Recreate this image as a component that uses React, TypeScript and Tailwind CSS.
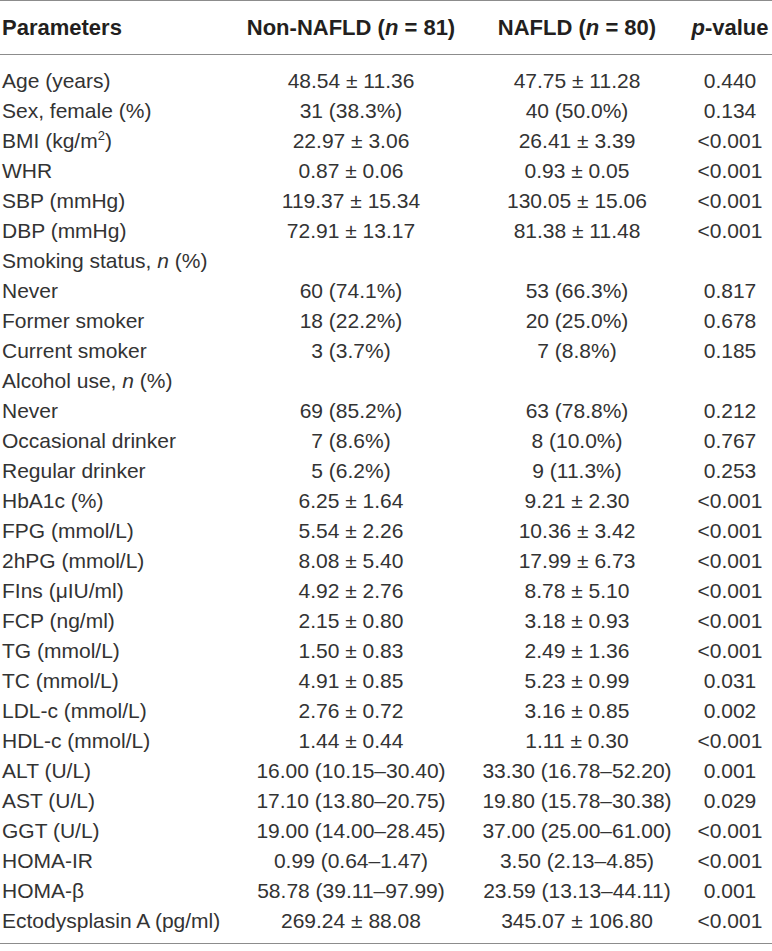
import React from 'react';

type Row = {
  label: React.ReactNode;
  a?: string;
  b?: string;
  p?: string;
};

const rows: Row[] = [
  { label: 'Age (years)', a: '48.54 ± 11.36', b: '47.75 ± 11.28', p: '0.440' },
  { label: 'Sex, female (%)', a: '31 (38.3%)', b: '40 (50.0%)', p: '0.134' },
  {
    label: (
      <>
        BMI (kg/m<sup className="text-[13px] -top-[8px]">2</sup>)
      </>
    ),
    a: '22.97 ± 3.06',
    b: '26.41 ± 3.39',
    p: '<0.001'
  },
  { label: 'WHR', a: '0.87 ± 0.06', b: '0.93 ± 0.05', p: '<0.001' },
  { label: 'SBP (mmHg)', a: '119.37 ± 15.34', b: '130.05 ± 15.06', p: '<0.001' },
  { label: 'DBP (mmHg)', a: '72.91 ± 13.17', b: '81.38 ± 11.48', p: '<0.001' },
  {
    label: (
      <>
        Smoking status, <i>n</i> (%)
      </>
    )
  },
  { label: 'Never', a: '60 (74.1%)', b: '53 (66.3%)', p: '0.817' },
  { label: 'Former smoker', a: '18 (22.2%)', b: '20 (25.0%)', p: '0.678' },
  { label: 'Current smoker', a: '3 (3.7%)', b: '7 (8.8%)', p: '0.185' },
  {
    label: (
      <>
        Alcohol use, <i>n</i> (%)
      </>
    )
  },
  { label: 'Never', a: '69 (85.2%)', b: '63 (78.8%)', p: '0.212' },
  { label: 'Occasional drinker', a: '7 (8.6%)', b: '8 (10.0%)', p: '0.767' },
  { label: 'Regular drinker', a: '5 (6.2%)', b: '9 (11.3%)', p: '0.253' },
  { label: 'HbA1c (%)', a: '6.25 ± 1.64', b: '9.21 ± 2.30', p: '<0.001' },
  { label: 'FPG (mmol/L)', a: '5.54 ± 2.26', b: '10.36 ± 3.42', p: '<0.001' },
  { label: '2hPG (mmol/L)', a: '8.08 ± 5.40', b: '17.99 ± 6.73', p: '<0.001' },
  { label: 'FIns (μIU/ml)', a: '4.92 ± 2.76', b: '8.78 ± 5.10', p: '<0.001' },
  { label: 'FCP (ng/ml)', a: '2.15 ± 0.80', b: '3.18 ± 0.93', p: '<0.001' },
  { label: 'TG (mmol/L)', a: '1.50 ± 0.83', b: '2.49 ± 1.36', p: '<0.001' },
  { label: 'TC (mmol/L)', a: '4.91 ± 0.85', b: '5.23 ± 0.99', p: '0.031' },
  { label: 'LDL-c (mmol/L)', a: '2.76 ± 0.72', b: '3.16 ± 0.85', p: '0.002' },
  { label: 'HDL-c (mmol/L)', a: '1.44 ± 0.44', b: '1.11 ± 0.30', p: '<0.001' },
  { label: 'ALT (U/L)', a: '16.00 (10.15–30.40)', b: '33.30 (16.78–52.20)', p: '0.001' },
  { label: 'AST (U/L)', a: '17.10 (13.80–20.75)', b: '19.80 (15.78–30.38)', p: '0.029' },
  { label: 'GGT (U/L)', a: '19.00 (14.00–28.45)', b: '37.00 (25.00–61.00)', p: '<0.001' },
  { label: 'HOMA-IR', a: '0.99 (0.64–1.47)', b: '3.50 (2.13–4.85)', p: '<0.001' },
  { label: 'HOMA-β', a: '58.78 (39.11–97.99)', b: '23.59 (13.13–44.11)', p: '0.001' },
  { label: 'Ectodysplasin A (pg/ml)', a: '269.24 ± 88.08', b: '345.07 ± 106.80', p: '<0.001' }
];

const cols = 'grid grid-cols-[236px_230px_222px_84px]';

export default function App() {
  return (
    <div
      className="w-[772px] h-[951px] bg-white text-[#231f20]"
      style={{ fontFamily: '"Liberation Sans", Arial, sans-serif' }}
    >
      <div className="border-t-[1.5px] border-b-[1.5px] border-[#8c8c8c]">
        {/* Header */}
        <div className={`${cols} h-[54px] items-center font-bold text-[22px] leading-none border-b-[1.5px] border-[#8c8c8c]`}>
          <div className="pl-[2px]">Parameters</div>
          <div className="text-center whitespace-nowrap">
            Non-NAFLD (<i>n</i> = 81)
          </div>
          <div className="text-center whitespace-nowrap">
            NAFLD (<i>n</i> = 80)
          </div>
          <div className="text-center whitespace-nowrap">
            <i>p</i>-value
          </div>
        </div>

        {/* Body */}
        <div className="pt-[10px] pb-[8px] text-[21px] text-[#333]">
          {rows.map((r, i) => (
            <div key={i} className={`${cols} h-[30px] items-center leading-none`}>
              <div className="pl-[2px] whitespace-nowrap">{r.label}</div>
              <div className="text-center whitespace-nowrap">{r.a}</div>
              <div className="text-center whitespace-nowrap">{r.b}</div>
              <div className="text-center whitespace-nowrap">{r.p}</div>
            </div>
          ))}
        </div>
      </div>
    </div>
  );
}
